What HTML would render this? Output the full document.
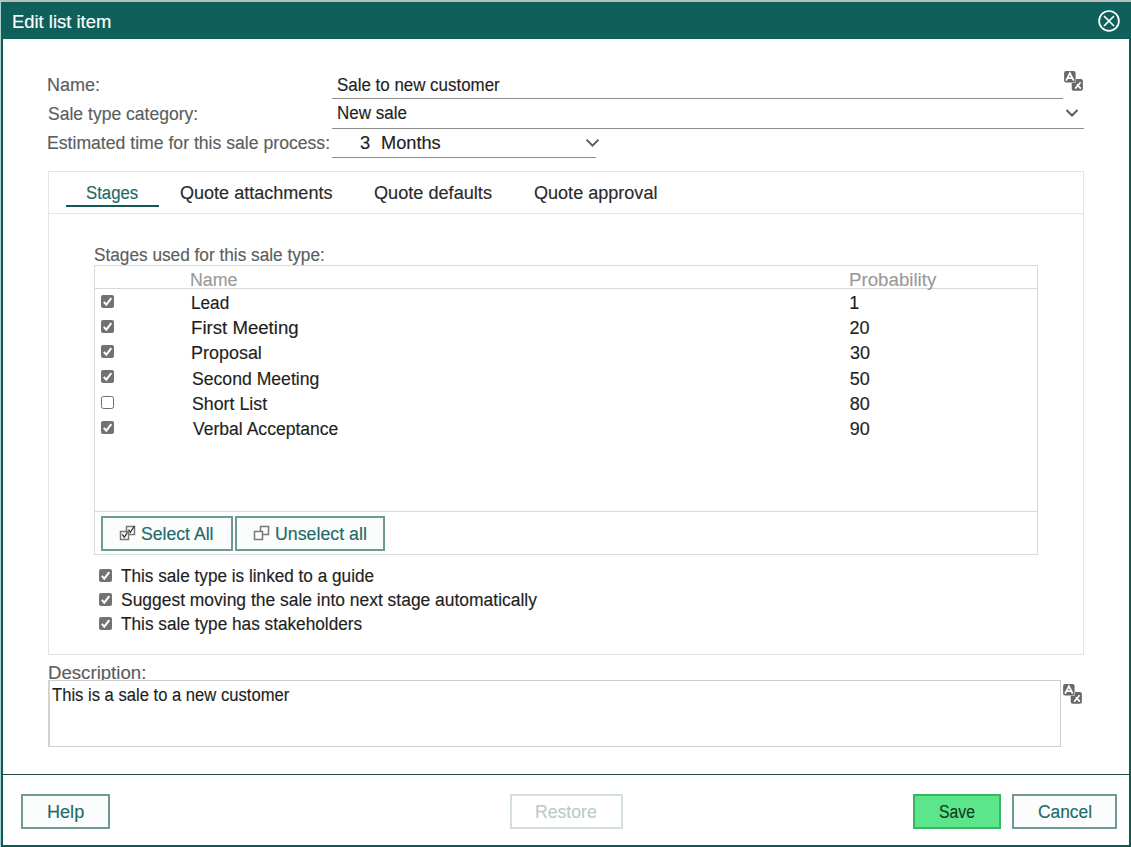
<!DOCTYPE html>
<html><head><meta charset="utf-8">
<style>
*{box-sizing:border-box;margin:0;padding:0}
html,body{width:1131px;height:847px;overflow:hidden;background:#fff}
body{position:relative;font-family:"Liberation Sans",sans-serif}
.a{position:absolute}
.t{position:absolute;font-size:18px;line-height:18px;white-space:nowrap;transform-origin:0 50%;-webkit-text-stroke:0.15px currentColor}
.btn{position:absolute;border:2px solid #6f9995;background:#fbfcfc}
.cb{position:absolute;width:13px;height:13px;border-radius:2px;background:#727272}
.cb svg{position:absolute;left:0;top:0}
.cbu{position:absolute;width:13px;height:13px;border-radius:2.5px;border:1.5px solid #707070;background:#fff}
</style></head><body>
<!-- outer -->
<div class="a" style="left:0;top:0;width:1131px;height:2px;background:#bdbdbd"></div>
<div class="a" style="left:0;top:0;width:1px;height:847px;background:#a9d2d0"></div>
<!-- dialog frame -->
<div class="a" style="left:1px;top:2px;width:1130px;height:845px;background:#0f5a55"></div>
<div class="a" style="left:3px;top:39px;width:1126px;height:806px;background:#fff"></div>
<div class="a" style="left:1px;top:2px;width:1130px;height:37px;background:#0f605a"></div>
<!-- close icon -->
<svg class="a" style="left:1097px;top:9px" width="24" height="24" viewBox="0 0 24 24">
<circle cx="12" cy="11.9" r="9.9" fill="none" stroke="#fff" stroke-width="1.7"/>
<path d="M7 7 L17 17 M17 7 L7 17" stroke="#fff" stroke-width="1.7" stroke-linecap="butt"/>
</svg>
<!-- form underlines -->
<div class="a" style="left:332px;top:98px;width:731px;height:1px;background:#8c8c8c"></div>
<div class="a" style="left:332px;top:128px;width:752px;height:1px;background:#8c8c8c"></div>
<div class="a" style="left:332px;top:157px;width:264px;height:1px;background:#8c8c8c"></div>
<!-- translate icon 1 -->
<svg class="a" style="left:1063px;top:70px" width="22" height="22" viewBox="0 0 22 22">
<rect x="8.7" y="9" width="11.2" height="11.7" rx="2" fill="#686868"/>
<path d="M17.6 12.3 L12.2 18.6 M14 14.2 L17.8 18.6" stroke="#fff" stroke-width="1.7"/>
<rect x="0.6" y="0.6" width="12.5" height="12.5" rx="2.5" fill="#fff"/>
<rect x="1.1" y="1.1" width="11.5" height="11.5" rx="2" fill="#686868"/>
<path d="M3.1 10.6 L6.9 3.2 L10.7 10.6 M4.7 8.2 L9.1 8.2" stroke="#fff" stroke-width="1.8" fill="none"/>
</svg>
<!-- chevrons -->
<svg class="a" style="left:1064px;top:107px" width="16" height="12" viewBox="0 0 16 12">
<path d="M2.5 3 L8 8.5 L13.5 3" stroke="#5c5c5c" stroke-width="2" fill="none"/>
</svg>
<svg class="a" style="left:585px;top:136px" width="16" height="12" viewBox="0 0 16 12">
<path d="M1.5 3.6 L7.5 9.6 L13.5 3.6" stroke="#5c5c5c" stroke-width="2" fill="none"/>
</svg>
<!-- panel -->
<div class="a" style="left:48px;top:171px;width:1036px;height:484px;border:1px solid #e5e5e5"></div>
<div class="a" style="left:48px;top:213px;width:1036px;height:1px;background:#e5e5e5"></div>
<div class="a" style="left:66px;top:205px;width:93px;height:2px;background:#0f5a55"></div>
<!-- table -->
<div class="a" style="left:94px;top:265px;width:944px;height:290px;border:1px solid #d9d9d9"></div>
<div class="a" style="left:94px;top:288px;width:944px;height:1px;background:#d9d9d9"></div>
<div class="a" style="left:94px;top:511px;width:944px;height:1px;background:#d9d9d9"></div>
<div class="cb" style="left:101px;top:294.5px"><svg width="13" height="13" viewBox="0 0 13 13"><path d="M2.8 6.8 L5.3 9.6 L10.3 3.1" stroke="#fff" stroke-width="2" fill="none"/></svg></div>
<div class="cb" style="left:101px;top:319.8px"><svg width="13" height="13" viewBox="0 0 13 13"><path d="M2.8 6.8 L5.3 9.6 L10.3 3.1" stroke="#fff" stroke-width="2" fill="none"/></svg></div>
<div class="cb" style="left:101px;top:345.1px"><svg width="13" height="13" viewBox="0 0 13 13"><path d="M2.8 6.8 L5.3 9.6 L10.3 3.1" stroke="#fff" stroke-width="2" fill="none"/></svg></div>
<div class="cb" style="left:101px;top:370.4px"><svg width="13" height="13" viewBox="0 0 13 13"><path d="M2.8 6.8 L5.3 9.6 L10.3 3.1" stroke="#fff" stroke-width="2" fill="none"/></svg></div>
<div class="cbu" style="left:101px;top:395.7px"></div>
<div class="cb" style="left:101px;top:421.0px"><svg width="13" height="13" viewBox="0 0 13 13"><path d="M2.8 6.8 L5.3 9.6 L10.3 3.1" stroke="#fff" stroke-width="2" fill="none"/></svg></div>
<div class="cb" style="left:99px;top:569px"><svg width="13" height="13" viewBox="0 0 13 13"><path d="M2.8 6.8 L5.3 9.6 L10.3 3.1" stroke="#fff" stroke-width="2" fill="none"/></svg></div>
<div class="cb" style="left:99px;top:593px"><svg width="13" height="13" viewBox="0 0 13 13"><path d="M2.8 6.8 L5.3 9.6 L10.3 3.1" stroke="#fff" stroke-width="2" fill="none"/></svg></div>
<div class="cb" style="left:99px;top:617px"><svg width="13" height="13" viewBox="0 0 13 13"><path d="M2.8 6.8 L5.3 9.6 L10.3 3.1" stroke="#fff" stroke-width="2" fill="none"/></svg></div>
<!-- buttons -->
<div class="btn" style="left:101px;top:516px;width:132px;height:35px"></div>
<div class="btn" style="left:235px;top:516px;width:150px;height:35px"></div>
<!-- select icons -->
<svg class="a" style="left:119px;top:524px" width="18" height="18" viewBox="0 0 18 18">
<rect x="7.5" y="2.5" width="8" height="8" fill="#fff" stroke="#777" stroke-width="1.5"/>
<path d="M9.5 5.5 L11.3 8.3 L15.5 2" stroke="#333" stroke-width="1.3" fill="none"/>
<rect x="1.5" y="7.5" width="8" height="8" fill="#fff" stroke="#777" stroke-width="1.5"/>
<path d="M3.3 10.3 L5.3 13.3 L8.3 8.3" stroke="#333" stroke-width="1.3" fill="none"/>
</svg>
<svg class="a" style="left:253px;top:525px" width="18" height="18" viewBox="0 0 18 18">
<rect x="7.5" y="1.5" width="8" height="8" fill="#fff" stroke="#777" stroke-width="1.5"/>
<rect x="1.5" y="6.5" width="8" height="8" fill="#fff" stroke="#777" stroke-width="1.5"/>
</svg>
<!-- description -->
<div class="a" style="left:48px;top:680px;width:1013px;height:67px;border:1px solid #cdcdcd;border-left:2px solid #d2d2d2;background:#fff;z-index:1"></div>
<svg class="a" style="left:1062.3px;top:682.6px" width="22" height="22" viewBox="0 0 22 22">
<rect x="8.7" y="9" width="11.2" height="11.7" rx="2" fill="#686868"/>
<path d="M17.6 12.3 L12.2 18.6 M14 14.2 L17.8 18.6" stroke="#fff" stroke-width="1.7"/>
<rect x="0.6" y="0.6" width="12.5" height="12.5" rx="2.5" fill="#fff"/>
<rect x="1.1" y="1.1" width="11.5" height="11.5" rx="2" fill="#686868"/>
<path d="M3.1 10.6 L6.9 3.2 L10.7 10.6 M4.7 8.2 L9.1 8.2" stroke="#fff" stroke-width="1.8" fill="none"/>
</svg>
<!-- footer -->
<div class="a" style="left:3px;top:774px;width:1126px;height:1px;background:#1d4f4a"></div>
<div class="btn" style="left:21px;top:794px;width:89px;height:35px"></div>
<div class="btn" style="left:510px;top:794px;width:113px;height:35px;border-color:#d3dfde;background:#fff"></div>
<div class="btn" style="left:913px;top:794px;width:88px;height:35px;border-color:#36b863;background:#5de58b"></div>
<div class="btn" style="left:1012px;top:794px;width:105px;height:35px"></div>
<span class="t" style="left:11.53px;top:12.76px;color:#ffffff;transform:scaleX(1.0228);">Edit list item</span>
<span class="t" style="left:47.06px;top:75.76px;color:#5a5e5e;">Name:</span>
<span class="t" style="left:47.80px;top:104.76px;color:#5a5e5e;transform:scaleX(0.9750);">Sale type category:</span>
<span class="t" style="left:47.09px;top:133.76px;color:#5a5e5e;transform:scaleX(0.9791);">Estimated time for this sale process:</span>
<span class="t" style="left:337.32px;top:75.76px;color:#1e1e1e;transform:scaleX(0.9400);">Sale to new customer</span>
<span class="t" style="left:336.64px;top:103.76px;color:#1e1e1e;transform:scaleX(0.9452);">New sale</span>
<span class="t" style="left:360.45px;top:133.76px;color:#1e1e1e;transform:scaleX(1.0204);">3</span>
<span class="t" style="left:380.54px;top:133.76px;color:#1e1e1e;transform:scaleX(1.0114);">Months</span>
<span class="t" style="left:86.33px;top:183.76px;color:#1a6a6a;transform:scaleX(0.9310);">Stages</span>
<span class="t" style="left:180.28px;top:183.76px;color:#2a2a2a;transform:scaleX(1.0025);">Quote attachments</span>
<span class="t" style="left:373.97px;top:183.76px;color:#2a2a2a;transform:scaleX(1.0076);">Quote defaults</span>
<span class="t" style="left:533.98px;top:183.76px;color:#2a2a2a;transform:scaleX(1.0029);">Quote approval</span>
<span class="t" style="left:94.31px;top:245.76px;color:#5a5e5e;transform:scaleX(0.9571);">Stages used for this sale type:</span>
<span class="t" style="left:189.88px;top:270.76px;color:#9a9a9a;transform:scaleX(0.9886);">Name</span>
<span class="t" style="left:849.20px;top:270.76px;color:#9a9a9a;transform:scaleX(1.0387);">Probability</span>
<span class="t" style="left:140.89px;top:524.76px;color:#1e6a6a;transform:scaleX(0.9796);">Select All</span>
<span class="t" style="left:275.36px;top:524.76px;color:#1e6a6a;transform:scaleX(0.9872);">Unselect all</span>
<span class="t" style="left:120.86px;top:566.76px;color:#1e1e1e;transform:scaleX(0.9544);">This sale type is linked to a guide</span>
<span class="t" style="left:120.50px;top:590.76px;color:#1e1e1e;transform:scaleX(0.9689);">Suggest moving the sale into next stage automatically</span>
<span class="t" style="left:120.86px;top:614.76px;color:#1e1e1e;transform:scaleX(0.9565);">This sale type has stakeholders</span>
<span class="t" style="left:47.81px;top:663.96px;color:#5a5e5e;transform:scaleX(1.0346);">Description:</span>
<span class="t" style="left:52.37px;top:685.76px;color:#1e1e1e;transform:scaleX(0.9228);z-index:2;">This is a sale to a new customer</span>
<span class="t" style="left:46.55px;top:802.76px;color:#1e6a6a;transform:scaleX(1.0049);">Help</span>
<span class="t" style="left:535.19px;top:802.76px;color:#b9cbc9;transform:scaleX(0.9797);">Restore</span>
<span class="t" style="left:939.17px;top:802.76px;color:#143a22;transform:scaleX(0.8750);">Save</span>
<span class="t" style="left:1038.03px;top:802.76px;color:#1e6a6a;transform:scaleX(0.9646);">Cancel</span>
<span class="t" style="left:191.12px;top:293.76px;color:#1e1e1e;transform:scaleX(0.9550);">Lead</span>
<span class="t" style="left:849.24px;top:293.76px;color:#1e1e1e;">1</span>
<span class="t" style="left:191.01px;top:318.76px;color:#1e1e1e;transform:scaleX(1.0347);">First Meeting</span>
<span class="t" style="left:849.60px;top:318.76px;color:#1e1e1e;">20</span>
<span class="t" style="left:191.06px;top:343.76px;color:#1e1e1e;transform:scaleX(0.9973);">Proposal</span>
<span class="t" style="left:849.96px;top:343.76px;color:#1e1e1e;">30</span>
<span class="t" style="left:191.80px;top:369.76px;color:#1e1e1e;transform:scaleX(0.9785);">Second Meeting</span>
<span class="t" style="left:849.78px;top:369.76px;color:#1e1e1e;">50</span>
<span class="t" style="left:191.79px;top:394.76px;color:#1e1e1e;transform:scaleX(0.9874);">Short List</span>
<span class="t" style="left:849.78px;top:394.76px;color:#1e1e1e;">80</span>
<span class="t" style="left:192.50px;top:419.76px;color:#1e1e1e;transform:scaleX(0.9749);">Verbal Acceptance</span>
<span class="t" style="left:849.78px;top:419.76px;color:#1e1e1e;">90</span>
</body></html>
